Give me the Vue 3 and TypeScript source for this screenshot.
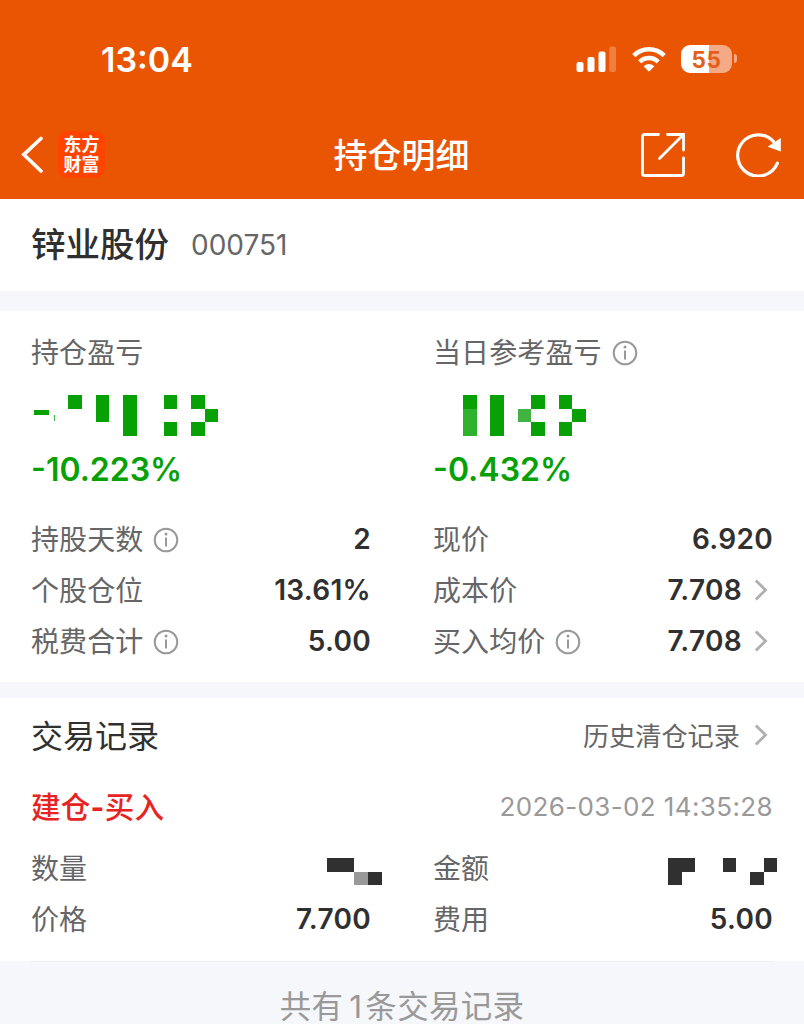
<script setup lang="ts">
interface Cell {
  x: number
  y: number
  w: number
  h: number
  tone?: string
}

interface Field {
  label: string
  value?: string
  info?: boolean
  link?: boolean
  mask?: 'quantity' | 'amount'
}

const U = 13.67

const profitMask: Cell[] = [
  { x: 0, y: 15.1, w: 15, h: 5 },
  { x: 20, y: 19.5, w: 1, h: 6, tone: 'pale' },
  { x: 34.2, y: 0, w: U, h: U },
  { x: 61.7, y: 0, w: U, h: U * 2 },
  { x: 89, y: 0, w: U, h: U * 3 },
  { x: 129.8, y: 0, w: U, h: U },
  { x: 129.8, y: U * 2, w: U, h: U },
  { x: 157, y: 0, w: U, h: U },
  { x: 157, y: U * 2, w: U, h: U },
  { x: 170.7, y: U, w: U, h: U },
]

const todayMask: Cell[] = [
  { x: 0, y: 0, w: U, h: U },
  { x: 0, y: U, w: U, h: U * 2, tone: 'soft' },
  { x: U * 2, y: 0, w: U, h: U * 3 },
  { x: U * 4, y: U, w: U, h: U, tone: 'pale' },
  { x: U * 5, y: 0, w: U, h: U },
  { x: U * 5, y: U * 2, w: U, h: U },
  { x: U * 7, y: 0, w: U, h: U },
  { x: U * 7, y: U * 2, w: U, h: U },
  { x: U * 8, y: U, w: U, h: U },
]

const masks: Record<'quantity' | 'amount', Cell[]> = {
  quantity: [
    { x: 0, y: 0, w: U * 2, h: U },
    { x: U * 2, y: U, w: U, h: U, tone: 'grey' },
    { x: U * 3, y: U, w: U, h: U },
  ],
  amount: [
    { x: 0, y: 0, w: U * 2, h: U },
    { x: 0, y: U, w: U, h: U },
    { x: U * 4, y: 0, w: U, h: U },
    { x: U * 6, y: U, w: U, h: U },
    { x: U * 7, y: 0, w: U, h: U },
  ],
}

const position: Field[] = [
  { label: '持股天数', value: '2', info: true },
  { label: '现价', value: '6.920' },
  { label: '个股仓位', value: '13.61%' },
  { label: '成本价', value: '7.708', link: true },
  { label: '税费合计', value: '5.00', info: true },
  { label: '买入均价', value: '7.708', info: true, link: true },
]

const trade: Field[] = [
  { label: '数量', mask: 'quantity' },
  { label: '金额', mask: 'amount' },
  { label: '价格', value: '7.700' },
  { label: '费用', value: '5.00' },
]
</script>

<template>
  <main class="screen">
    <header class="top">
      <div class="status">
        <span class="time">13:04</span>
        <div class="status-icons">
          <svg class="signal" width="40" height="26" viewBox="0 0 40 26">
            <rect x="0.5" y="16" width="7" height="10" rx="2" />
            <rect x="11.5" y="11" width="7" height="15" rx="2" />
            <rect x="22.5" y="5.5" width="7" height="20.5" rx="2" />
            <rect x="33.3" y="0.5" width="6.7" height="25.5" rx="2" opacity="0.25" />
          </svg>
          <svg class="wifi" width="34" height="26" viewBox="0 0 34 26">
            <path d="M1.8 9.6 A21.5 21.5 0 0 1 32.2 9.6" />
            <path d="M7.8 15.8 A13 13 0 0 1 26.2 15.8" />
            <path class="dot" d="M11.6 20.2 Q17 15.6 22.4 20.2 L17.8 25 Q17 25.8 16.2 25 Z" />
          </svg>
          <div class="battery">
            <span class="battery-body">55</span>
            <span class="battery-tip"></span>
          </div>
        </div>
      </div>
      <nav class="nav">
        <div class="nav-left">
          <svg class="back" width="22" height="38" viewBox="0 0 22 38">
            <path d="M20 2.5 L2.8 18.6 L20 35" />
          </svg>
          <div class="logo"><span>东方</span><span>财富</span></div>
        </div>
        <h1>持仓明细</h1>
        <div class="nav-right">
          <svg width="44" height="44" viewBox="0 0 44 44">
            <path d="M17.5 1.5 H3.5 Q1.5 1.5 1.5 3.5 V40.5 Q1.5 42.5 3.5 42.5 H40.5 Q42.5 42.5 42.5 40.5 V25" />
            <path d="M26.5 1.5 H42.5 V17 M42 2 L18.5 25.5" />
          </svg>
          <svg class="refresh" width="46" height="44" viewBox="0 0 46 44">
            <path d="M41.4 30.2 A20.6 20.6 0 1 1 37.5 8.6" />
            <path class="tip" d="M44.8 5 V18.6 L31.6 13.8 Z" />
          </svg>
        </div>
      </nav>
    </header>

    <section class="stock">
      <h2>锌业股份</h2>
      <span class="code">000751</span>
    </section>

    <section class="card position">
      <div class="columns">
        <div class="summary">
          <div class="label">持仓盈亏</div>
          <svg class="mask green profit" width="186" height="42">
            <rect v-for="(c, i) in profitMask" :key="i" :x="c.x" :y="c.y" :width="c.w" :height="c.h" :class="c.tone" />
          </svg>
          <div class="percent total">-10.223%</div>
        </div>
        <div class="summary">
          <div class="label">
            当日参考盈亏
            <svg class="info" width="26" height="26" viewBox="0 0 26 26">
              <circle cx="13" cy="13" r="11.3" />
              <path d="M13 10.5 V19.5" />
              <circle class="point" cx="13" cy="6.9" r="1.5" />
            </svg>
          </div>
          <svg class="mask green today" width="124" height="42">
            <rect v-for="(c, i) in todayMask" :key="i" :x="c.x" :y="c.y" :width="c.w" :height="c.h" :class="c.tone" />
          </svg>
          <div class="percent">-0.432%</div>
        </div>
      </div>
      <div class="columns fields">
        <div v-for="f in position" :key="f.label" class="field">
          <div class="label">
            {{ f.label }}
            <svg v-if="f.info" class="info" width="26" height="26" viewBox="0 0 26 26">
              <circle cx="13" cy="13" r="11.3" />
              <path d="M13 10.5 V19.5" />
              <circle class="point" cx="13" cy="6.9" r="1.5" />
            </svg>
          </div>
          <div class="value">
            {{ f.value }}
            <svg v-if="f.link" class="more" width="14" height="22" viewBox="0 0 14 22">
              <path d="M1.8 1.4 L11.5 11 L1.8 20.6" />
            </svg>
          </div>
        </div>
      </div>
    </section>

    <section class="card records">
      <div class="records-head">
        <h3>交易记录</h3>
        <div class="history">
          历史清仓记录
          <svg class="more" width="14" height="22" viewBox="0 0 14 22">
            <path d="M1.8 1.4 L11.5 11 L1.8 20.6" />
          </svg>
        </div>
      </div>
      <div class="trade-head">
        <strong>建仓<i>-</i>买入</strong>
        <time>2026-03-02 14:35:28</time>
      </div>
      <div class="columns fields">
        <div v-for="f in trade" :key="f.label" class="field">
          <div class="label">{{ f.label }}</div>
          <svg v-if="f.mask" class="mask" :class="f.mask" :width="f.mask === 'amount' ? 110 : 55" height="28">
            <rect v-for="(c, i) in masks[f.mask]" :key="i" :x="c.x" :y="c.y" :width="c.w" :height="c.h" :class="c.tone" />
          </svg>
          <div v-else class="value">{{ f.value }}</div>
        </div>
      </div>
    </section>

    <footer><p>共有<b>1</b>条交易记录</p></footer>
  </main>
</template>

<style>
html,
body {
  margin: 0;
  overflow: hidden;
}
</style>

<style scoped>
.screen {
  width: 804px;
  height: 1024px;
  overflow: hidden;
  display: flex;
  flex-direction: column;
  background: #f5f7fa;
  color: #303030;
  font-family: Inter, 'Noto Sans CJK SC', sans-serif;
}
.screen * {
  box-sizing: border-box;
}
svg {
  display: block;
  flex: none;
}
h1,
h2,
h3,
p {
  margin: 0;
}
.top {
  height: 199px;
  flex: none;
  background: #e95502;
  color: #fff;
}
.status {
  height: 111px;
  padding: 8px 67px 0 101px;
  display: flex;
  align-items: center;
  justify-content: space-between;
}
.time {
  font-size: 34px;
  font-weight: 600;
  line-height: 40px;
}
.status-icons {
  display: flex;
  align-items: center;
  margin-bottom: 2px;
}
.signal {
  fill: #fff;
}
.wifi {
  margin-left: 16px;
  fill: none;
  stroke: #fff;
  stroke-width: 4.6;
}
.wifi .dot {
  fill: #fff;
  stroke: none;
}
.battery {
  margin-left: 15px;
  display: flex;
  align-items: center;
  gap: 2px;
}
.battery-body {
  width: 51px;
  height: 28px;
  border-radius: 9px;
  background: linear-gradient(90deg, #fff 54%, #f4a987 54%);
  color: #e2601c;
  font-size: 22.5px;
  font-weight: 700;
  letter-spacing: 0.6px;
  line-height: 29px;
  text-align: center;
}
.battery-tip {
  width: 3px;
  height: 9px;
  border-radius: 0 3px 3px 0;
  background: #f4a987;
}
.nav {
  height: 88px;
  padding: 0 22px 0 21px;
  display: grid;
  grid-template-columns: 1fr auto 1fr;
  align-items: center;
}
.nav-left,
.nav-right {
  display: flex;
  align-items: center;
}
.nav-left {
  gap: 15px;
}
.nav-right {
  justify-content: flex-end;
  gap: 51px;
}
.back,
.nav-right svg {
  fill: none;
  stroke: #fff;
  stroke-width: 2.8;
  stroke-linecap: round;
}
.nav-right .refresh {
  stroke-width: 3.2;
}
.back {
  stroke-width: 3.6;
}
.nav-right .tip {
  fill: #fff;
  stroke: none;
}
.logo {
  width: 47px;
  height: 47px;
  margin-bottom: 2px;
  padding-bottom: 3px;
  border-radius: 9px;
  background: #ff4400;
  display: flex;
  flex-direction: column;
  align-items: center;
  justify-content: center;
  font-family: 'Noto Sans CJK SC', sans-serif;
  font-size: 18px;
  font-weight: 700;
  line-height: 20px;
}
h1 {
  margin-top: 2px;
  font-size: 34px;
  font-weight: 500;
  line-height: 48px;
}
.stock {
  height: 92px;
  flex: none;
  padding: 0 31px;
  display: flex;
  align-items: center;
  background: #fff;
}
h2 {
  font-size: 34.5px;
  font-weight: 500;
  line-height: 48px;
}
.code {
  margin-left: 22px;
  color: #666;
  font-size: 28px;
}
.card {
  flex: none;
  background: #fff;
  padding: 0 31px;
}
.columns {
  display: grid;
  grid-template-columns: 340px 340px;
  column-gap: 62px;
}
.position {
  height: 371px;
  margin-top: 20px;
  padding-top: 22px;
}
.label {
  display: flex;
  align-items: center;
  gap: 10px;
  color: #666;
  font-size: 28px;
  letter-spacing: 0.1px;
  line-height: 40px;
}
.info {
  fill: none;
  stroke: #999;
  stroke-width: 2;
}
.info .point {
  fill: #999;
  stroke: none;
}
.mask {
  overflow: visible;
  fill: #303030;
  shape-rendering: crispEdges;
}
.mask.green {
  margin-top: 22px;
  fill: #07a105;
}
.profit {
  margin-left: 3px;
}
.today {
  margin-left: 30px;
}
.green .soft {
  fill: #2eb22e;
}
.green .pale {
  fill: #42b342;
}
.mask .grey {
  fill: #999;
}
.percent {
  margin-top: 13px;
  color: #07a105;
  font-size: 32px;
  font-weight: 600;
  line-height: 40px;
}
.fields {
  grid-auto-rows: 51px;
}
.position .fields {
  margin-top: 24px;
}
.field {
  display: flex;
  align-items: center;
  justify-content: space-between;
}
.value {
  display: flex;
  align-items: center;
  gap: 12px;
  padding-bottom: 1px;
  font-size: 28px;
  font-weight: 600;
  letter-spacing: 0.3px;
}
.more {
  margin-right: 5px;
  fill: none;
  stroke: #b0b0b0;
  stroke-width: 2.8;
}
.records {
  height: 263px;
  margin-top: 16px;
}
.records-head {
  height: 74px;
  display: flex;
  align-items: center;
  justify-content: space-between;
}
h3 {
  margin-bottom: 2px;
  font-size: 32px;
  font-weight: 400;
}
.history {
  display: flex;
  align-items: center;
  gap: 14px;
  color: #666;
  font-size: 26.2px;
}
.trade-head {
  height: 68px;
  display: flex;
  align-items: center;
  justify-content: space-between;
}
strong {
  margin-bottom: 2px;
  color: #e62424;
  font-size: 29.5px;
  font-weight: 500;
  letter-spacing: 0.3px;
}
strong i {
  font-style: normal;
  font-weight: 700;
}
time {
  color: #999;
  font-size: 26px;
  letter-spacing: 0.38px;
}
.records .fields {
  margin-top: 3px;
}
.quantity {
  margin-right: -11px;
  margin-top: 7px;
}
.amount {
  margin-right: -5px;
  margin-top: 7px;
}
footer {
  flex: 1;
  margin: 0 31px;
  border-top: 1px solid #eceef0;
  color: #999;
  font-size: 31.5px;
  text-align: center;
}
footer p {
  margin-top: 22px;
  letter-spacing: 0.3px;
  line-height: 46px;
}
footer b {
  font-weight: 400;
  margin: 0 3px 0 6px;
}
</style>
